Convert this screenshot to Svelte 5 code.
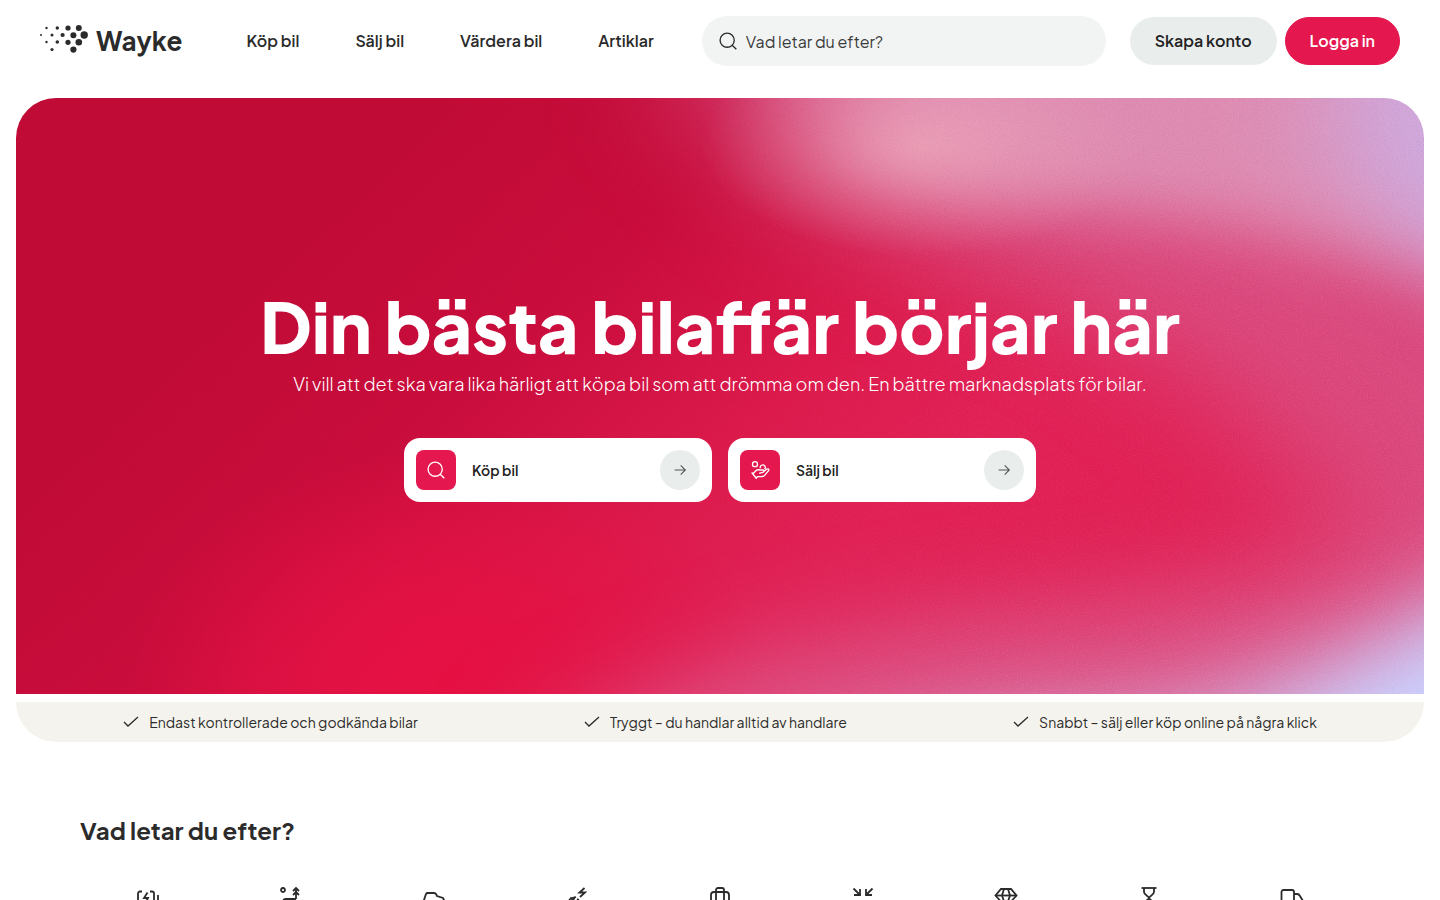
<script>
  let query = $state("");

  const nav = ["Köp bil", "Sälj bil", "Värdera bil", "Artiklar"];

  const usps = [
    "Endast kontrollerade och godkända bilar",
    "Tryggt – du handlar alltid av handlare",
    "Snabbt – sälj eller köp online på några klick",
  ];

  // cx, cy, r
  const dots = [
    [1, 10, 1], [6.5, 3, 1.2], [6.5, 17, 1.2], [12, 10, 1.5], [12, 24.5, 1.6],
    [17.3, 3, 1.7], [17.3, 17, 1.8], [22.6, 10, 2.1], [28, 3, 2.6], [28, 17.3, 2.6],
    [33.4, 10.3, 3], [33.4, 24.6, 3.1], [38.8, 3, 3], [38.8, 17.3, 3.3], [44.2, 10, 3.7],
  ];

  const categories = [
    { id: "electric", paths: ["M6 5.500H4a2 2 0 0 0-2 2v9a2 2 0 0 0 2 2h2", "M14 5.500h2a2 2 0 0 1 2 2v9a2 2 0 0 1-2 2h-2", "M11.500 6.500L8 12h4l-3 6", "M22 9v7"] },
    { id: "long-range", paths: ["M4 2a2 2 0 1 0 .01 0z", "M17 13V2", "M14 5l3-3 3 3", "M14 9l3-3 3 3", "M17 13H7a3 3 0 0 0 0 6h10"] },
    { id: "family", paths: ["M2 19v-5l2-6 1-1h7q2 0 3 3l6 2 1 2v5z"] },
    { id: "hybrid", paths: ["M19.500 2l-5 4.500h5.500L15 11", "M10 11l-2 3-2-2-5 6", "M11 11l-4 1", "M12 13l2 1"] },
    { id: "luggage", paths: ["M8 21V4a2 2 0 0 1 2-2h4a2 2 0 0 1 2 2v17", "M6 6h12a3 3 0 0 1 3 3v9a3 3 0 0 1-3 3H6a3 3 0 0 1-3-3V9a3 3 0 0 1 3-3z"] },
    { id: "compact", paths: ["M2.500 2.500L9 9", "M9 3v6H3", "M21.500 2.500L15 9", "M15 3v6h6", "M2 22l7-7", "M22 22l-7-7"] },
    { id: "luxury", paths: ["M7 3h10l5.500 6.500L12 21 1.500 9.500z", "M1.500 9.500h21", "M10 3L8 9.500 12 21", "M14 3l2 6.500L12 21"] },
    { id: "classic", paths: ["M4.500 2h15", "M7 2v4c0 3 5 4 5 6 0-2 5-3 5-6V2", "M7 22v-4c0-3 5-4 5-6 0 2 5 3 5 6v4", "M4.500 22h15"] },
    { id: "transport", paths: ["M14 19H1.500V6a2 2 0 0 1 2-2H12a2 2 0 0 1 2 2z", "M14 8h3q2 0 3 2l3 5v4h-9"] },
  ];
</script>

{#snippet arrow()}
  <span class="arrow">
    <svg viewBox="0 0 24 24" width="16" height="16" aria-hidden="true">
      <path d="M4 12h16M13 5l7 7-7 7" />
    </svg>
  </span>
{/snippet}

<header class="header">
  <a class="logo" href="#start">
    <svg viewBox="0 0 48 32" width="48" height="32" aria-hidden="true">
      {#each dots as [cx, cy, r]}
        <circle {cx} {cy} {r} />
      {/each}
    </svg>
    <span>Wayke</span>
  </a>

  <nav class="nav">
    {#each nav as item}
      <a href="#{item}">{item}</a>
    {/each}
  </nav>

  <label class="search">
    <svg viewBox="0 0 24 24" width="20" height="20" aria-hidden="true">
      <circle cx="11" cy="11" r="8.500" />
      <path d="M17 17l5 5" />
    </svg>
    <input type="search" placeholder="Vad letar du efter?" bind:value={query} />
  </label>

  <div class="account">
    <button class="btn" type="button">Skapa konto</button>
    <button class="btn primary" type="button">Logga in</button>
  </div>
</header>

<main>
  <section class="hero">
    <svg class="backdrop" viewBox="0 0 1408 596" preserveAspectRatio="none" aria-hidden="true">
      <defs>
        <linearGradient id="base" gradientUnits="userSpaceOnUse" x1="330" y1="60" x2="760" y2="520">
          <stop offset="0" stop-color="#c00b36" />
          <stop offset="0.4" stop-color="#c90d3c" />
          <stop offset="0.75" stop-color="#dc1a4c" />
          <stop offset="1" stop-color="#e12257" />
        </linearGradient>
        <radialGradient id="ember">
          <stop offset="0" stop-color="#e61043" />
          <stop offset="0.4" stop-color="#e61043" stop-opacity="0.7" />
          <stop offset="1" stop-color="#e61043" stop-opacity="0" />
        </radialGradient>
        <radialGradient id="glow">
          <stop offset="0" stop-color="#eda6b9" stop-opacity="0.75" />
          <stop offset="0.5" stop-color="#eda6b9" stop-opacity="0.3" />
          <stop offset="1" stop-color="#eda6b9" stop-opacity="0" />
        </radialGradient>
        <linearGradient id="fade">
          <stop offset="0.3" stop-color="#fff" stop-opacity="0.15" />
          <stop offset="0.7" stop-color="#fff" />
        </linearGradient>
        <filter id="wide" x="-50%" y="-50%" width="200%" height="200%" color-interpolation-filters="sRGB">
          <feGaussianBlur stdDeviation="70 45" />
        </filter>
        <filter id="soft" x="-50%" y="-50%" width="200%" height="200%" color-interpolation-filters="sRGB">
          <feGaussianBlur stdDeviation="60 30" />
        </filter>
        <filter id="grain" x="0" y="0" width="100%" height="100%" color-interpolation-filters="sRGB">
          <feTurbulence type="fractalNoise" baseFrequency="0.8" numOctaves="2" />
          <feColorMatrix values="0.33 0.33 0.33 0 0 0.33 0.33 0.33 0 0 0.33 0.33 0.33 0 0 0 0 0 0 1" />
        </filter>
        <mask id="grain-mask">
          <rect width="1408" height="596" fill="url(#fade)" />
        </mask>
      </defs>
      <rect width="1408" height="596" fill="url(#base)" />
      <ellipse cx="430" cy="580" rx="320" ry="230" fill="url(#ember)" />
      <g filter="url(#wide)">
        <path d="M680 -140H1600V800H1280Q1440 560 1300 400Q1200 250 1000 190Q760 130 680 -20Z" fill="#da5588" opacity="0.8" />
        <path d="M560 640Q760 530 1050 510Q1250 500 1560 380V800H560Z" fill="#dd5587" />
      </g>
      <g filter="url(#soft)">
        <path d="M760 -120H1600V240Q1400 170 1180 120Q960 110 860 80Z" fill="#de8cb2" />
        <path d="M1330 -120H1600V260Q1420 190 1320 60Z" fill="#cfaade" />
        <path d="M700 720Q900 600 1100 600Q1250 590 1600 400V720Z" fill="#d78dbb" />
        <path d="M1160 680Q1330 580 1560 450V720Z" fill="#cbd2ff" />
      </g>
      <ellipse cx="905" cy="48" rx="220" ry="110" fill="url(#glow)" />
      <g class="grain" mask="url(#grain-mask)">
        <rect width="1408" height="596" filter="url(#grain)" />
      </g>
    </svg>

    <h1>Din bästa bilaffär börjar här</h1>
    <p>Vi vill att det ska vara lika härligt att köpa bil som att drömma om den. En bättre marknadsplats för bilar.</p>

    <div class="actions">
      <a class="action" href="#buy">
        <span class="tile">
          <svg viewBox="0 0 24 24" width="20" height="20" aria-hidden="true">
            <circle cx="11" cy="11" r="8.500" />
            <path d="M17 17l5 5" />
          </svg>
        </span>
        Köp bil
        {@render arrow()}
      </a>
      <a class="action" href="#sell">
        <span class="tile">
          <svg viewBox="0 0 24 24" width="20" height="20" aria-hidden="true">
            <circle cx="6" cy="5" r="3" />
            <path d="M12.500 10a3 3 0 1 1 5 1" />
            <path d="M3 17l4-4q2-2 5-1h4q2 1 0 2.500L11 16M16 14l4-3q3-1 2.500 1.500L17 19q-2 1-4 1H9l-2 2M2 15l6 7.500" />
          </svg>
        </span>
        Sälj bil
        {@render arrow()}
      </a>
    </div>
  </section>

  <ul class="usps">
    {#each usps as usp}
      <li>
        <svg viewBox="0 0 16 16" width="16" height="16" aria-hidden="true">
          <path d="M1 8l4 4L15 3" />
        </svg>
        {usp}
      </li>
    {/each}
  </ul>

  <section class="browse">
    <h2>Vad letar du efter?</h2>
    <ul class="categories">
      {#each categories as category (category.id)}
        <li>
          <svg viewBox="0 0 24 24" width="24" height="24" aria-hidden="true">
            {#each category.paths as d}
              <path {d} />
            {/each}
          </svg>
        </li>
      {/each}
    </ul>
  </section>
</main>

<style>
  :global(body) {
    margin: 0;
    background: #fff;
    color: #2b2b2b;
    font-family: "Plus Jakarta Sans", Inter, sans-serif;
    font-size: 16px;
  }

  a {
    color: inherit;
    text-decoration: none;
  }

  ul {
    list-style: none;
    margin: 0;
    padding: 0;
  }

  svg {
    flex: none;
    fill: none;
    stroke: currentColor;
    stroke-width: 1.6;
  }

  /* Header */
  .header {
    display: flex;
    align-items: center;
    height: 82px;
    padding: 0 40px;
  }

  .logo {
    display: flex;
    align-items: center;
    gap: 8px;
    margin-right: 64px;
    font-size: 26px;
    font-weight: 700;
    line-height: 32px;
  }

  .logo svg {
    fill: currentColor;
    stroke: none;
  }

  .nav {
    display: flex;
    gap: 56px;
    margin-right: 48px;
    font-weight: 600;
    line-height: 20px;
    white-space: nowrap;
  }

  .search {
    display: flex;
    flex: 1;
    align-items: center;
    gap: 8px;
    height: 50px;
    min-width: 0;
    padding: 0 16px;
    box-sizing: border-box;
    border-radius: 25px;
    background: #f1f4f3;
  }

  .search input {
    flex: 1;
    min-width: 0;
    padding: 0;
    border: 0;
    outline: 0;
    background: none;
    color: inherit;
    font: inherit;
  }

  .search input::placeholder {
    color: #3b3b3b;
    opacity: 1;
  }

  .account {
    display: flex;
    gap: 8px;
    margin-left: 24px;
  }

  .btn {
    height: 48px;
    padding: 0 24px;
    border: 1px solid #e9eeed;
    border-radius: 24px;
    background: #e9eeed;
    color: #212121;
    font: inherit;
    font-weight: 600;
    line-height: 20px;
    white-space: nowrap;
    cursor: pointer;
  }

  .btn.primary {
    border-color: #e5174f;
    background: #e5174f;
    color: #fff;
  }

  /* Hero */
  main {
    padding: 16px 16px 0;
  }

  .hero {
    position: relative;
    display: flex;
    flex-direction: column;
    align-items: center;
    padding: 192px 24px;
    overflow: hidden;
    border-radius: 40px 40px 0 0;
    color: #fff;
    text-align: center;
  }

  .backdrop {
    position: absolute;
    inset: 0;
    z-index: -1;
    width: 100%;
    height: 100%;
    stroke: none;
  }

  .grain {
    mix-blend-mode: soft-light;
    opacity: 0.4;
  }

  h1 {
    margin: 0 0 8px;
    font-size: 70px;
    font-weight: 800;
    line-height: 72px;
  }

  .hero p {
    margin: 0 0 40px;
    font-size: 18px;
    font-weight: 300;
    line-height: 28px;
  }

  .actions {
    display: flex;
    gap: 16px;
  }

  .action {
    display: flex;
    align-items: center;
    gap: 16px;
    width: 308px;
    padding: 12px;
    box-sizing: border-box;
    border-radius: 16px;
    background: #fff;
    color: #212121;
    font-size: 14px;
    font-weight: 600;
  }

  .tile,
  .arrow {
    display: flex;
    align-items: center;
    justify-content: center;
    width: 40px;
    height: 40px;
  }

  .tile {
    border-radius: 8px;
    background: #e5174f;
    color: #fff;
  }

  .arrow {
    margin-left: auto;
    border-radius: 50%;
    background: #e9eeed;
    color: #555;
  }

  /* Selling points */
  .usps {
    display: flex;
    justify-content: space-around;
    margin-top: 8px;
    padding: 0 24px;
    border-radius: 0 0 40px 40px;
    background: #f5f3ed;
    font-size: 14px;
    line-height: 40px;
  }

  .usps li {
    display: flex;
    align-items: center;
    gap: 10px;
  }

  .usps svg {
    stroke-width: 1.3;
  }

  /* Browse */
  .browse {
    padding: 72px 64px 0;
  }

  h2 {
    margin: 0 0 40px;
    font-size: 24px;
    font-weight: 700;
    line-height: 32px;
  }

  .categories {
    display: grid;
    grid-template-columns: repeat(9, 1fr);
    gap: 8px;
  }

  .categories li {
    display: flex;
    justify-content: center;
  }

  .categories svg {
    stroke-width: 1.8;
  }
</style>
